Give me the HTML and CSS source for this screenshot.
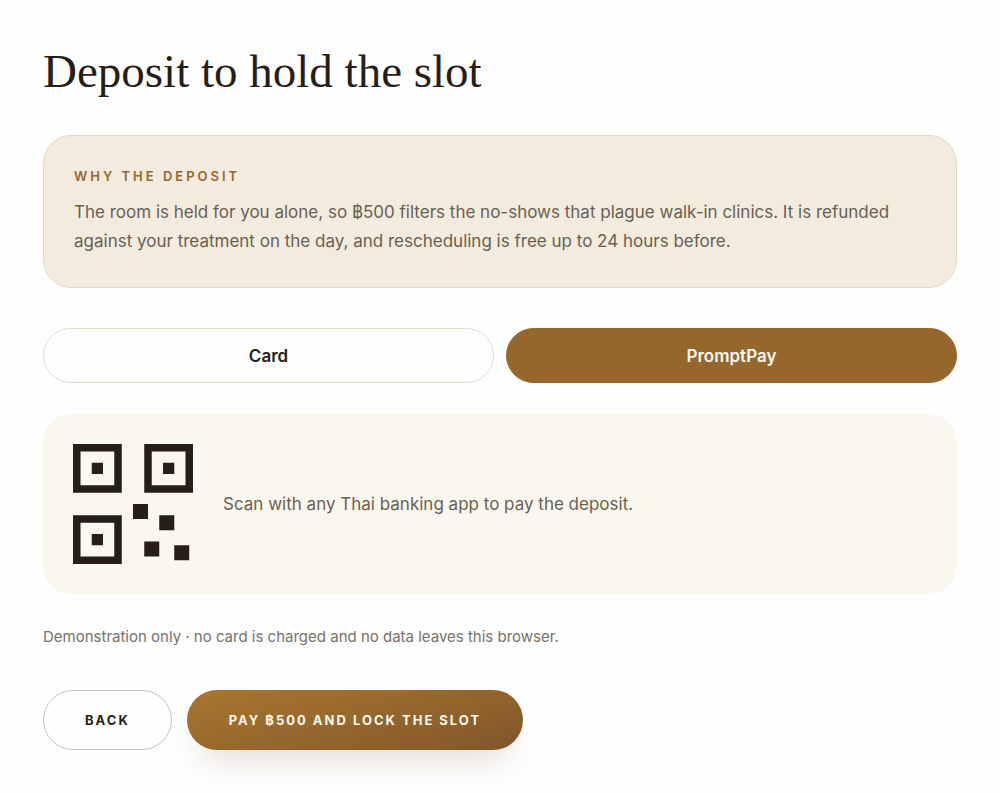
FILE: index.html
```html
<!DOCTYPE html>
<html lang="en">
<head>
  <meta charset="UTF-8" />
  <meta name="viewport" content="width=device-width, initial-scale=1.0" />
  <title>Deposit to hold the slot</title>
  <link rel="stylesheet" href="styles.css">
</head>
<body>

  <main class="step">
    <h1>Deposit to hold the slot</h1>

    <section class="why">
      <h2>Why the deposit</h2>
      <p>The room is held for you alone, so ฿500 filters the no-shows that plague walk-in clinics. It is refunded against your treatment on the day, and rescheduling is free up to 24 hours before.</p>
    </section>

    <div class="methods">
      <button type="button" class="method">Card</button>
      <button type="button" class="method active">PromptPay</button>
    </div>

    <section class="qr-panel">
      <svg class="qr" viewBox="0 0 32 32" role="img" aria-label="PromptPay QR code">
        <!-- corner squares -->
        <g fill="none" stroke="#271f17" stroke-width="2">
          <rect x="1" y="1" width="11" height="11" />
          <rect x="20" y="1" width="11" height="11" />
          <rect x="1" y="20" width="11" height="11" />
        </g>
        <g fill="#271f17">
          <rect x="5" y="5" width="3" height="3" />
          <rect x="24" y="5" width="3" height="3" />
          <rect x="5" y="24" width="3" height="3" />
          <rect x="16" y="16" width="4" height="4" />
          <rect x="23" y="19" width="4" height="4" />
          <rect x="19" y="26" width="4" height="4" />
          <rect x="27" y="27" width="4" height="4" />
        </g>
      </svg>
      <p>Scan with any Thai banking app to pay the deposit.</p>
    </section>

    <p class="note">Demonstration only · no card is charged and no data leaves this browser.</p>

    <div class="actions">
      <button type="button" class="btn btn-back">Back</button>
      <button type="submit" class="btn btn-pay">Pay ฿500 and lock the slot</button>
    </div>
  </main>

</body>
</html>
```
FILE: styles.css
```css
* {
  box-sizing: border-box;
}

body {
  margin: 0;
  background-color: #fefefe;
  color: #271f17;
  font-family: Inter, "Liberation Sans", sans-serif;
  font-size: 17px;
  font-weight: 400;
}

h1, h2, p {
  margin: 0;
}

button {
  font-family: inherit;
  cursor: pointer;
}

.step {
  padding: 41px 43px;
}

h1 {
  margin-bottom: 34px;
  font-family: "Liberation Serif", serif;
  font-size: 47px;
  font-weight: 400;
  line-height: 60px;
}

.why {
  padding: 30px;
  border: 1px solid #e2dac4;
  border-radius: 28px;
  background-color: #f2ebde;
}

.why h2 {
  margin-bottom: 12px;
  color: #96672c;
  font-size: 13px;
  font-weight: 600;
  letter-spacing: 3px;
  line-height: 20px;
  text-transform: uppercase;
}

.why p {
  margin-bottom: 1px;
  color: #6a5f52;
  line-height: 29px;
}

.methods {
  display: grid;
  grid-template-columns: 1fr 1fr;
  gap: 12px;
  margin: 40px 0 31px;
}

.method {
  height: 55px;
  border: 1px solid #e2dccb;
  border-radius: 28px;
  background-color: #fefefe;
  color: #271f17;
  font-size: 17px;
  font-weight: 600;
}

.method.active {
  border-color: #96672c;
  background-color: #96672c;
  color: #fdf8ee;
}

.qr-panel {
  display: flex;
  align-items: center;
  gap: 30px;
  padding: 30px;
  border-radius: 28px;
  background-color: #faf7ee;
  color: #6a5f52;
}

.qr {
  display: block;
  flex: none;
  width: 120px;
  height: 120px;
}

.note {
  margin: 31px 0 41px;
  color: #77726a;
  font-size: 15px;
  line-height: 24px;
}

.actions {
  display: flex;
  flex-wrap: wrap;
  gap: 15px;
}

.btn {
  height: 60px;
  padding: 0 41px;
  border: 1px solid #c4c1bd;
  border-radius: 30px;
  background-color: #fefefe;
  color: #271f17;
  font-size: 13px;
  font-weight: 700;
  letter-spacing: 2px;
  text-transform: uppercase;
}

.btn-pay {
  border-color: transparent;
  background: linear-gradient(165deg, #a87630, #96672c 50%, #80552a) border-box;
  box-shadow: 0 22px 32px -14px rgba(128, 85, 42, 0.22);
  color: #fdf8ee;
}
```
